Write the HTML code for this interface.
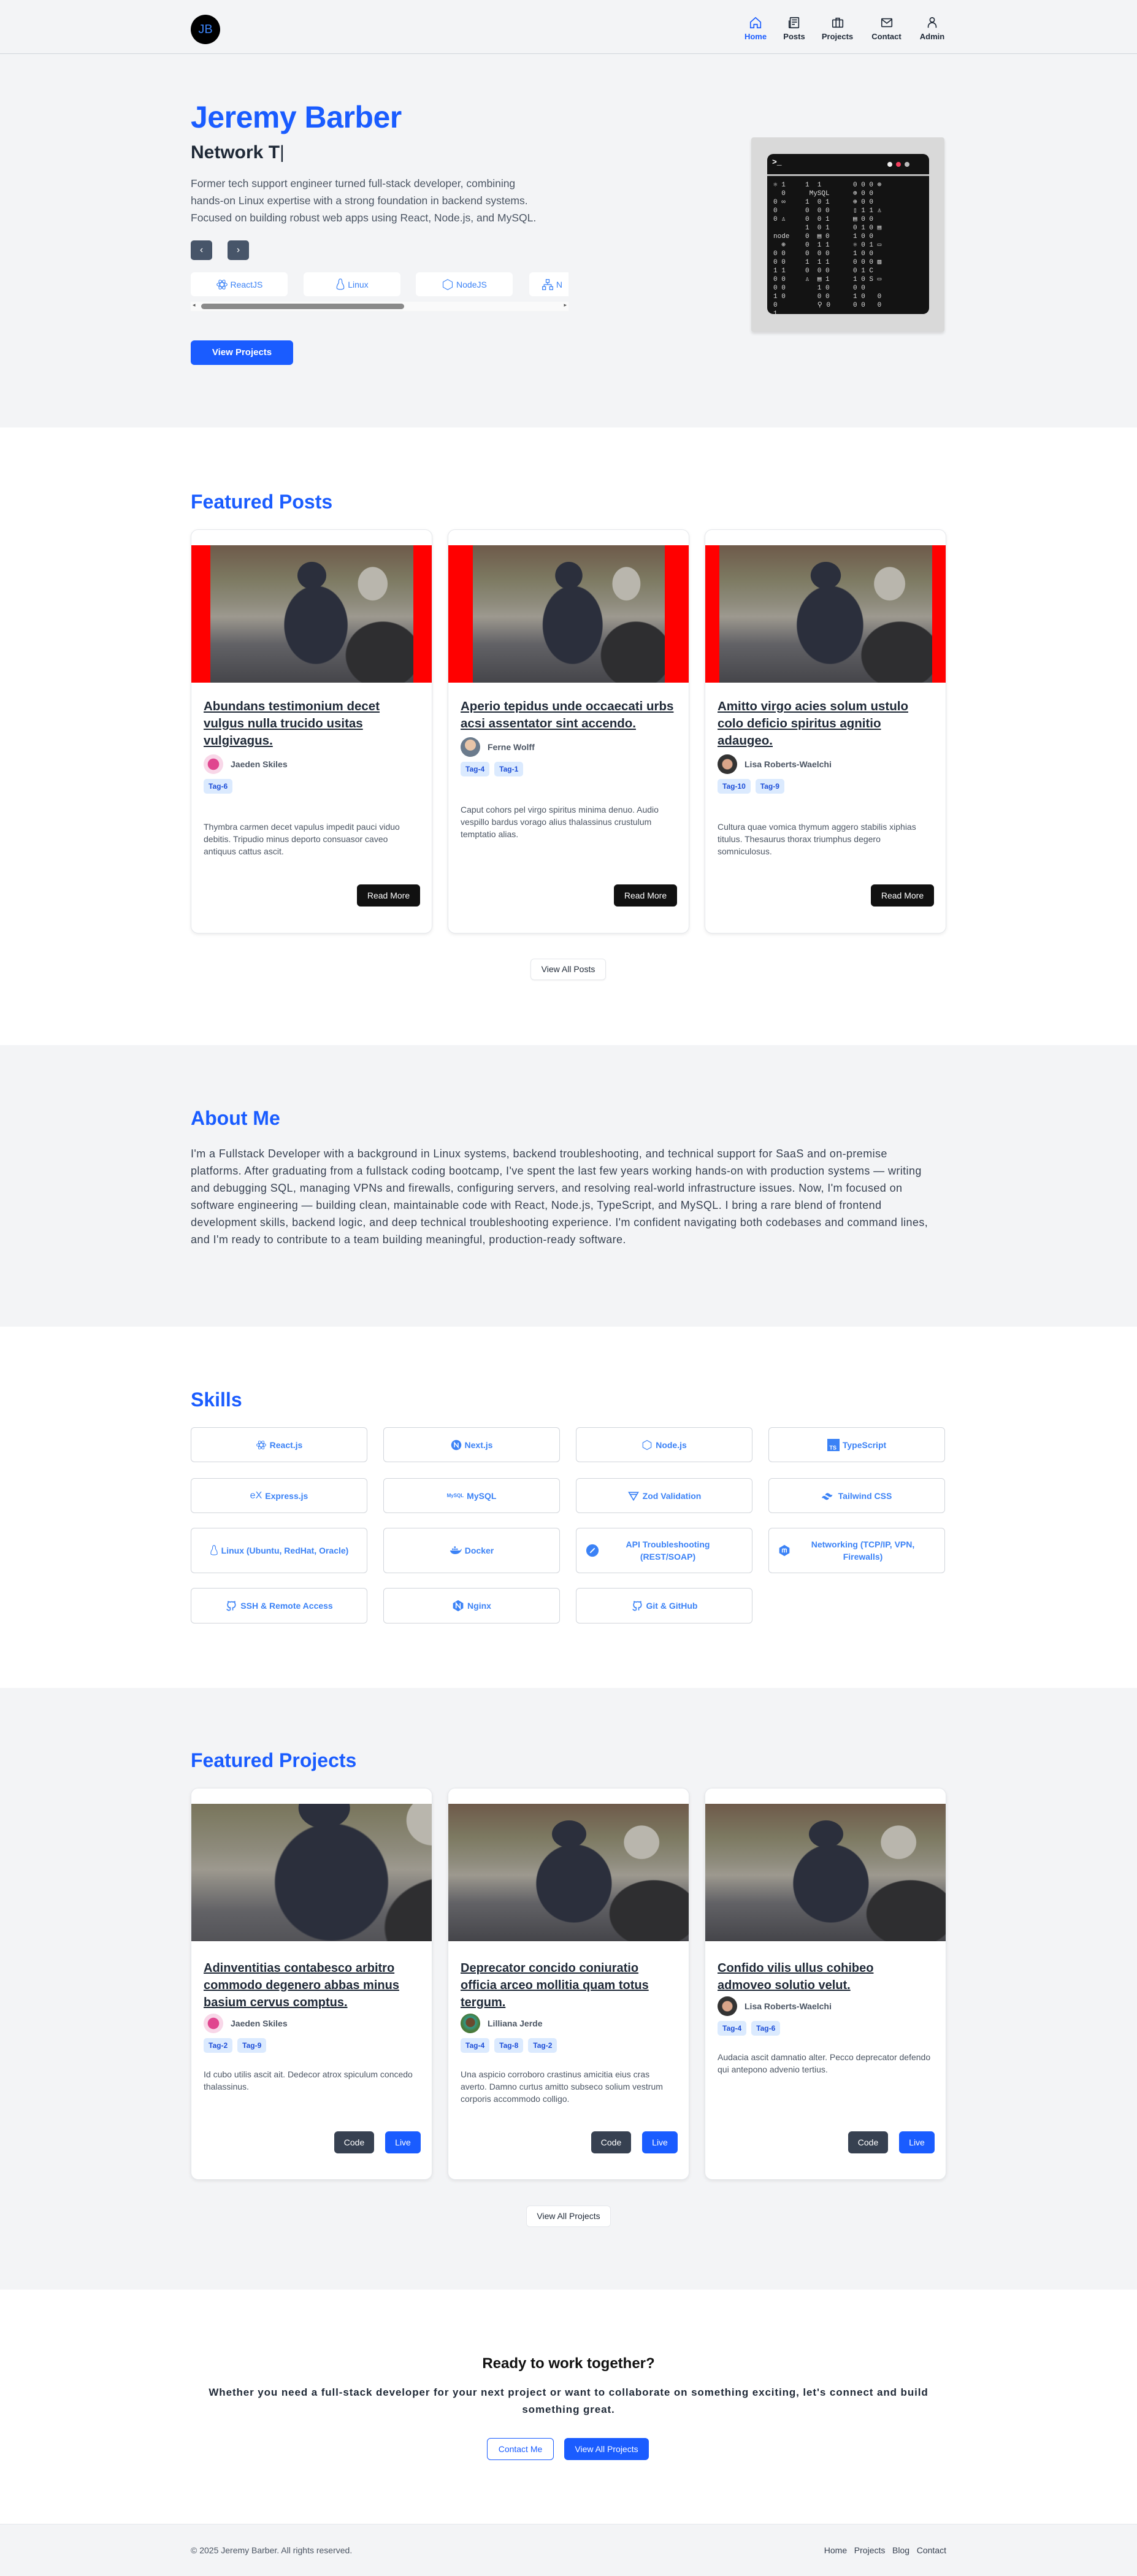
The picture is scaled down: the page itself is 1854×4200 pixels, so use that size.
<!DOCTYPE html>
<html><head><meta charset="utf-8">
<style>
*{box-sizing:border-box;margin:0;padding:0}
body{width:1854px;height:4200px;font-family:"Liberation Sans",sans-serif;background:#fff;color:#1f2937;position:relative;overflow:hidden}
.abs{position:absolute}
.sec{position:absolute;left:0;width:1854px}
.gray{background:#f3f4f6}
h2.t{position:absolute;left:311px;font-size:32px;font-weight:700;color:#1a5cff}
.card{position:absolute;background:#fff;border:1px solid #e5e7eb;border-radius:12px;box-shadow:0 2px 6px rgba(0,0,0,.08);width:394px;overflow:hidden}
.photo{background:
radial-gradient(ellipse 22% 40% at 52% 58%,#2b2f3c 70%,rgba(43,47,60,0) 72%),
radial-gradient(ellipse 10% 14% at 50% 22%,#2b2f3c 70%,rgba(0,0,0,0) 72%),
radial-gradient(ellipse 30% 40% at 85% 80%,#2e2e30 60%,rgba(0,0,0,0) 62%),
radial-gradient(ellipse 12% 20% at 80% 28%,#b9b6ad 60%,rgba(0,0,0,0) 62%),
linear-gradient(180deg,#6e5a4a 0%,#7d7a62 25%,#8e8b7c 42%,#9d998f 52%,#626266 72%,#45454a 100%)}
.ctitle{position:absolute;left:20px;right:10px;font-size:20.5px;font-weight:700;line-height:28px;text-decoration:underline;color:#1f2937;white-space:nowrap}
.auth{position:absolute;left:20px;display:flex;align-items:center;font-size:14px;font-weight:700;color:#4b5563}
.av{width:32px;height:32px;border-radius:50%;margin-right:12px}
.tags{position:absolute;left:20px;display:flex;gap:8px}
.tag{background:#dbeafe;color:#1d4ed8;font-size:12px;font-weight:700;padding:0 8px;height:24px;line-height:24px;border-radius:5px}
.desc{position:absolute;left:20px;right:20px;font-size:14px;line-height:20px;color:#4b5563}
.btn{position:absolute;height:36px;line-height:36px;font-size:14px;border-radius:6px;text-align:center}
.skill{position:absolute;width:288px;border:1px solid #d1d5db;border-radius:6px;display:flex;align-items:center;justify-content:center;color:#3b82f6;font-size:14px;font-weight:700;text-align:center;line-height:20px;background:#fff}
.skill svg{margin-right:5px;flex:none}
.nav{position:absolute;top:26px;text-align:center;font-size:13px;font-weight:700;color:#1f2937}
.nav svg{display:block;margin:0 auto 4px}
.chip{position:absolute;top:444px;width:158px;height:39px;background:#fff;border-radius:6px;color:#3b82f6;font-size:14px;display:flex;align-items:center;justify-content:center}
.term{font-family:"Liberation Mono",monospace;color:#ddd;font-size:11px;line-height:14px;position:absolute;top:44px;white-space:pre}
</style></head><body>

<div class="sec gray" style="top:0;height:697px"></div>
<div class="sec" style="top:87px;height:1px;background:#d1d5db"></div>
<div class="abs" style="left:311px;top:24px;width:48px;height:48px;border-radius:50%;background:#000;color:#3b82f6;font-size:20px;line-height:48px;text-align:center">JB</div>

<div class="nav" style="left:1211px;width:42px;color:#1a5cff"><svg width="22" height="22" viewBox="0 0 24 24" fill="none" stroke="#1a5cff" stroke-width="1.8"><path d="M3 11l9-8 9 8v10h-6v-6H9v6H3z"/></svg>Home</div>
<div class="nav" style="left:1277px;width:36px"><svg width="22" height="22" viewBox="0 0 24 24" fill="none" stroke="#1f2937" stroke-width="1.8"><rect x="5" y="3" width="15" height="18" rx="1"/><path d="M8 7h9M8 11h9M8 15h5M3 8v12a1 1 0 0 0 2 0"/></svg>Posts</div>
<div class="nav" style="left:1337px;width:57px"><svg width="22" height="22" viewBox="0 0 24 24" fill="none" stroke="#1f2937" stroke-width="1.8"><rect x="3" y="7" width="18" height="13" rx="1"/><path d="M9 7V4h6v3M9 7v13M15 7v13"/></svg>Projects</div>
<div class="nav" style="left:1418px;width:55px"><svg width="22" height="22" viewBox="0 0 24 24" fill="none" stroke="#1f2937" stroke-width="1.8"><rect x="3" y="5" width="18" height="14" rx="1"/><path d="M3 6l9 7 9-7"/></svg>Contact</div>
<div class="nav" style="left:1497px;width:46px"><svg width="22" height="22" viewBox="0 0 24 24" fill="none" stroke="#1f2937" stroke-width="1.8"><circle cx="12" cy="7" r="4"/><path d="M5 21v-2a7 7 0 0 1 14 0v2"/></svg>Admin</div>

<div class="abs" style="left:311px;top:162px;font-size:50px;font-weight:700;color:#1a5cff;letter-spacing:-0.5px">Jeremy Barber</div>
<div class="abs" style="left:311px;top:232px;font-size:30px;font-weight:700;color:#1f2937">Network T<span style="font-weight:300">|</span></div>
<div class="abs" style="left:311px;top:285px;white-space:nowrap;font-size:17.5px;line-height:28px;color:#4b5563">Former tech support engineer turned full-stack developer, combining<br>hands-on Linux expertise with a strong foundation in backend systems.<br>Focused on building robust web apps using React, Node.js, and MySQL.</div>
<div class="abs" style="left:311px;top:392px;width:35px;height:32px;background:#475569;border-radius:5px;color:#fff;text-align:center;line-height:32px;font-size:16px">‹</div>
<div class="abs" style="left:371px;top:392px;width:35px;height:32px;background:#475569;border-radius:5px;color:#fff;text-align:center;line-height:32px;font-size:16px">›</div>
<div class="abs" style="left:311px;top:440px;width:616px;height:70px;overflow:hidden">
  <div class="chip" style="left:0;top:4px"><svg width="20" height="20" viewBox="0 0 24 24" fill="none" stroke="#3b82f6" stroke-width="1.3"><ellipse cx="12" cy="12" rx="10" ry="4"/><ellipse cx="12" cy="12" rx="10" ry="4" transform="rotate(60 12 12)"/><ellipse cx="12" cy="12" rx="10" ry="4" transform="rotate(120 12 12)"/></svg>&nbsp;ReactJS</div>
  <div class="chip" style="left:184px;top:4px"><svg width="16" height="22" viewBox="0 0 16 24" fill="none" stroke="#3b82f6" stroke-width="1.3"><path d="M8 2c-3 0-3 4-3 7-2 3-4 6-3 10 2 2 10 2 12 0 1-4-1-7-3-10 0-3 0-7-3-7z"/></svg>&nbsp;Linux</div>
  <div class="chip" style="left:367px;top:4px"><svg width="20" height="22" viewBox="0 0 24 24" fill="none" stroke="#3b82f6" stroke-width="1.3"><path d="M12 2l9 5v10l-9 5-9-5V7z"/></svg>&nbsp;NodeJS</div>
  <div class="chip" style="left:552px;top:4px;justify-content:flex-start;padding-left:20px"><svg width="20" height="20" viewBox="0 0 24 24" fill="none" stroke="#3b82f6" stroke-width="1.5"><rect x="9" y="2" width="6" height="6"/><rect x="2" y="16" width="6" height="6"/><rect x="16" y="16" width="6" height="6"/><path d="M12 8v4M5 16v-4h14v4"/></svg>&nbsp;N</div>
  <div class="abs" style="left:0;top:52px;width:616px;height:15px;background:#fafafa"><div class="abs" style="left:17px;top:3px;width:331px;height:9px;border-radius:5px;background:#8a8a8a"></div><span class="abs" style="left:3px;top:0;font-size:9px;color:#555">◂</span><span class="abs" style="right:3px;top:0;font-size:9px;color:#555">▸</span></div>
</div>
<div class="abs" style="left:311px;top:555px;width:167px;height:40px;background:#1a5cff;border-radius:6px;color:#fff;font-size:15px;font-weight:700;text-align:center;line-height:40px">View Projects</div>

<div class="abs" style="left:1225px;top:224px;width:315px;height:317px;background:#d9d9d9;border-radius:4px;box-shadow:0 3px 5px rgba(0,0,0,.12)">
  <div class="abs" style="left:26px;top:27px;width:264px;height:261px;background:#131313;border-radius:10px;overflow:hidden">
    <div class="abs" style="left:8px;top:6px;color:#fff;font-family:'Liberation Mono',monospace;font-size:13px;font-weight:700">&gt;_</div>
    <div class="abs" style="left:196px;top:13px;width:8px;height:8px;border-radius:50%;background:#eee"></div>
    <div class="abs" style="left:210px;top:13px;width:8px;height:8px;border-radius:50%;background:#f43f5e"></div>
    <div class="abs" style="left:224px;top:13px;width:8px;height:8px;border-radius:50%;background:#bbb"></div>
    <div class="abs" style="left:0;top:33px;width:264px;height:3px;background:#bbb"></div>
    <div class="term" style="left:10px">⚛ 1
  0
0 ∞
0
0 ♙
 
node
  ⊕
0 0
0 0
1 1
0 0
0 0
1 0
0
1</div>
    <div class="term" style="left:62px">1  1 
 MySQL
1  0 1
0  0 0
0  0 1
1  0 1
0  ▤ 0
0  1 1
0  0 0
1  1 1
0  0 0
♙  ▤ 1
   1 0
   0 0
   ⚲ 0</div>
    <div class="term" style="left:140px">0 0 0 ⊕
⊕ 0 0
⊕ 0 0
▯ 1 1 ♙
▤ 0 0
0 1 0 ▤
1 0 0
⚛ 0 1 ▭
1 0 0
0 0 0 ▨
0 1 C
1 0 S ▭
0 0
1 0   0
0 0   0</div>
  </div>
</div>

<h2 class="t" style="top:800px">Featured Posts</h2>

<div class="card" style="left:311px;top:863px;height:659px">
  <div class="abs" style="left:0;top:25px;width:394px;height:224px;background:#ff0000"><div class="photo abs" style="left:31px;top:0;width:331px;height:224px"></div></div>
  <div class="ctitle" style="top:274px">Abundans testimonium decet<br>vulgus nulla trucido usitas<br>vulgivagus.</div>
  <div class="auth" style="top:366px"><div class="av" style="background:radial-gradient(circle at 50% 50%,#e0468f 40%,#f8d7e8 42%)"></div>Jaeden Skiles</div>
  <div class="tags" style="top:406px"><span class="tag">Tag-6</span></div>
  <div class="desc" style="top:474px">Thymbra carmen decet vapulus impedit pauci viduo debitis. Tripudio minus deporto consuasor caveo antiquus cattus ascit.</div>
  <div class="btn" style="left:270px;top:578px;width:103px;background:#111;color:#fff">Read More</div>
</div>
<div class="card" style="left:730px;top:863px;height:659px">
  <div class="abs" style="left:0;top:25px;width:394px;height:224px;background:#ff0000"><div class="photo abs" style="left:40px;top:0;width:313px;height:224px"></div></div>
  <div class="ctitle" style="top:274px">Aperio tepidus unde occaecati urbs<br>acsi assentator sint accendo.</div>
  <div class="auth" style="top:338px"><div class="av" style="background:radial-gradient(circle at 50% 40%,#e8c5a8 35%,#6b7b8c 37%)"></div>Ferne Wolff</div>
  <div class="tags" style="top:378px"><span class="tag">Tag-4</span><span class="tag">Tag-1</span></div>
  <div class="desc" style="top:446px">Caput cohors pel virgo spiritus minima denuo. Audio vespillo bardus vorago alius thalassinus crustulum temptatio alias.</div>
  <div class="btn" style="left:270px;top:578px;width:103px;background:#111;color:#fff">Read More</div>
</div>
<div class="card" style="left:1149px;top:863px;height:659px">
  <div class="abs" style="left:0;top:25px;width:394px;height:224px;background:#ff0000"><div class="photo abs" style="left:23px;top:0;width:347px;height:224px"></div></div>
  <div class="ctitle" style="top:274px">Amitto virgo acies solum ustulo<br>colo deficio spiritus agnitio<br>adaugeo.</div>
  <div class="auth" style="top:366px"><div class="av" style="background:radial-gradient(circle at 50% 50%,#d9a58a 35%,#333 40%)"></div>Lisa Roberts-Waelchi</div>
  <div class="tags" style="top:406px"><span class="tag">Tag-10</span><span class="tag">Tag-9</span></div>
  <div class="desc" style="top:474px">Cultura quae vomica thymum aggero stabilis xiphias titulus. Thesaurus thorax triumphus degero somniculosus.</div>
  <div class="btn" style="left:270px;top:578px;width:103px;background:#111;color:#fff">Read More</div>
</div>
<div class="btn" style="left:865px;top:1563px;width:123px;height:35px;line-height:33px;border:1px solid #e5e7eb;background:#fff;color:#1f2937;box-shadow:0 1px 2px rgba(0,0,0,.06)">View All Posts</div>

<div class="sec gray" style="top:1704px;height:459px"></div>
<h2 class="t" style="top:1805px">About Me</h2>
<div class="abs" style="left:311px;top:1867px;white-space:nowrap;font-size:18px;letter-spacing:0.4px;line-height:28px;color:#374151">I'm a Fullstack Developer with a background in Linux systems, backend troubleshooting, and technical support for SaaS and on-premise<br>platforms. After graduating from a fullstack coding bootcamp, I've spent the last few years working hands-on with production systems — writing<br>and debugging SQL, managing VPNs and firewalls, configuring servers, and resolving real-world infrastructure issues. Now, I'm focused on<br>software engineering — building clean, maintainable code with React, Node.js, TypeScript, and MySQL. I bring a rare blend of frontend<br>development skills, backend logic, and deep technical troubleshooting experience. I'm confident navigating both codebases and command lines,<br>and I'm ready to contribute to a team building meaningful, production-ready software.</div>

<h2 class="t" style="top:2264px">Skills</h2>
<div class="skill" style="left:311px;top:2327px;height:57px"><svg width="18" height="18" viewBox="0 0 24 24" fill="none" stroke="#3b82f6" stroke-width="1.3"><ellipse cx="12" cy="12" rx="10" ry="4"/><ellipse cx="12" cy="12" rx="10" ry="4" transform="rotate(60 12 12)"/><ellipse cx="12" cy="12" rx="10" ry="4" transform="rotate(120 12 12)"/></svg>React.js</div>
<div class="skill" style="left:625px;top:2327px;height:57px"><svg width="18" height="18" viewBox="0 0 24 24"><circle cx="12" cy="12" r="11" fill="#3b82f6"/><path d="M8 17V7l8 10V7" stroke="#fff" stroke-width="2" fill="none"/></svg>Next.js</div>
<div class="skill" style="left:939px;top:2327px;height:57px"><svg width="18" height="18" viewBox="0 0 24 24" fill="none" stroke="#3b82f6" stroke-width="1.5"><path d="M12 2l9 5v10l-9 5-9-5V7z"/></svg>Node.js</div>
<div class="skill" style="left:1253px;top:2327px;height:57px"><svg width="20" height="20" viewBox="0 0 24 24"><rect width="24" height="24" fill="#3b82f6"/><text x="4" y="21" font-size="11" font-weight="700" fill="#fff" font-family="Liberation Sans">TS</text></svg>TypeScript</div>

<div class="skill" style="left:311px;top:2410px;height:57px"><span style="font-weight:400;margin-right:5px;font-size:16px">eX</span>Express.js</div>
<div class="skill" style="left:625px;top:2410px;height:57px"><span style="font-size:8px;margin-right:5px">MySQL</span>MySQL</div>
<div class="skill" style="left:939px;top:2410px;height:57px"><svg width="20" height="18" viewBox="0 0 24 20" fill="none" stroke="#3b82f6" stroke-width="2"><path d="M3 3h18l-9 15z M6 7h12"/></svg>Zod Validation</div>
<div class="skill" style="left:1253px;top:2410px;height:57px"><svg width="22" height="14" viewBox="0 0 24 14" fill="#3b82f6"><path d="M6 6c1-4 4-5 7-3 2 1 3 3 6 2-1 4-4 5-7 3-2-1-3-3-6-2zM0 11c1-4 4-5 7-3 2 1 3 3 6 2-1 4-4 5-7 3-2-1-3-3-6-2z"/></svg>Tailwind CSS</div>

<div class="skill" style="left:311px;top:2491px;height:74px"><svg width="14" height="20" viewBox="0 0 16 24" fill="none" stroke="#3b82f6" stroke-width="1.3"><path d="M8 2c-3 0-3 4-3 7-2 3-4 6-3 10 2 2 10 2 12 0 1-4-1-7-3-10 0-3 0-7-3-7z"/></svg>Linux (Ubuntu, RedHat, Oracle)</div>
<div class="skill" style="left:625px;top:2491px;height:74px"><svg width="20" height="16" viewBox="0 0 24 18" fill="#3b82f6"><path d="M1 9h20c1-2 2-3 3-3-1 5-5 10-13 10C5 16 2 13 1 9z"/><rect x="5" y="5" width="3" height="3"/><rect x="9" y="5" width="3" height="3"/><rect x="9" y="1" width="3" height="3"/><rect x="13" y="5" width="3" height="3"/></svg>Docker</div>
<div class="skill" style="left:939px;top:2491px;height:74px;justify-content:flex-start;padding-left:15px"><svg width="22" height="22" viewBox="0 0 24 24"><circle cx="12" cy="12" r="11" fill="#3b82f6"/><path d="M8 16l8-8" stroke="#fff" stroke-width="2"/></svg><span style="flex:1;padding-right:30px">API Troubleshooting<br>(REST/SOAP)</span></div>
<div class="skill" style="left:1253px;top:2491px;height:74px;justify-content:flex-start;padding-left:15px"><svg width="20" height="22" viewBox="0 0 24 24"><path d="M12 1l10 6v10l-10 6-10-6V7z" fill="#3b82f6"/><path d="M8 9v7M12 9v7M16 9v7M8 9h8" stroke="#fff" stroke-width="1.8"/></svg><span style="flex:1;padding-right:20px">Networking (TCP/IP, VPN,<br>Firewalls)</span></div>

<div class="skill" style="left:311px;top:2589px;height:58px"><svg width="20" height="20" viewBox="0 0 24 24" fill="none" stroke="#3b82f6" stroke-width="2"><path d="M9 21c-4 1-4-2-6-2M15 21v-3c0-1 0-2-1-2 3 0 6-1 6-6 0-1 0-2-1-3 0-1 0-2 0-3 0 0-1 0-3 1-2-1-4-1-6 0C7 4 6 4 6 4c0 1 0 2 0 3-1 1-1 2-1 3 0 5 3 6 6 6-1 0-1 1-1 2v3"/></svg>SSH &amp; Remote Access</div>
<div class="skill" style="left:625px;top:2589px;height:58px"><svg width="20" height="22" viewBox="0 0 24 24"><path d="M12 1l10 6v10l-10 6-10-6V7z" fill="#3b82f6"/><path d="M8 17V7l8 10V7" stroke="#fff" stroke-width="2" fill="none"/></svg>Nginx</div>
<div class="skill" style="left:939px;top:2589px;height:58px"><svg width="20" height="20" viewBox="0 0 24 24" fill="none" stroke="#3b82f6" stroke-width="2"><path d="M9 21c-4 1-4-2-6-2M15 21v-3c0-1 0-2-1-2 3 0 6-1 6-6 0-1 0-2-1-3 0-1 0-2 0-3 0 0-1 0-3 1-2-1-4-1-6 0C7 4 6 4 6 4c0 1 0 2 0 3-1 1-1 2-1 3 0 5 3 6 6 6-1 0-1 1-1 2v3"/></svg>Git &amp; GitHub</div>

<div class="sec gray" style="top:2752px;height:981px"></div>
<h2 class="t" style="top:2852px">Featured Projects</h2>

<div class="card" style="left:311px;top:2915px;height:639px">
  <div class="photo abs" style="left:0;top:25px;width:394px;height:224px;background-size:150% 150%;background-position:40% 60%"></div>
  <div class="ctitle" style="top:279px;font-size:20px">Adinventitias contabesco arbitro<br>commodo degenero abbas minus<br>basium cervus comptus.</div>
  <div class="auth" style="top:367px"><div class="av" style="background:radial-gradient(circle at 50% 50%,#e0468f 40%,#f8d7e8 42%)"></div>Jaeden Skiles</div>
  <div class="tags" style="top:407px"><span class="tag">Tag-2</span><span class="tag">Tag-9</span></div>
  <div class="desc" style="top:456px">Id cubo utilis ascit ait. Dedecor atrox spiculum concedo thalassinus.</div>
  <div class="btn" style="left:233px;top:559px;width:65px;background:#374151;color:#fff">Code</div>
  <div class="btn" style="left:316px;top:559px;width:58px;background:#1a5cff;color:#fff">Live</div>
</div>
<div class="card" style="left:730px;top:2915px;height:639px">
  <div class="photo abs" style="left:0;top:25px;width:394px;height:224px"></div>
  <div class="ctitle" style="top:279px;font-size:20px">Deprecator concido coniuratio<br>officia arceo mollitia quam totus<br>tergum.</div>
  <div class="auth" style="top:367px"><div class="av" style="background:radial-gradient(circle at 50% 45%,#6b4a2e 30%,#2f9a8a 35%,#4a7a3a 60%)"></div>Lilliana Jerde</div>
  <div class="tags" style="top:407px"><span class="tag">Tag-4</span><span class="tag">Tag-8</span><span class="tag">Tag-2</span></div>
  <div class="desc" style="top:456px">Una aspicio corroboro crastinus amicitia eius cras averto. Damno curtus amitto subseco solium vestrum corporis accommodo colligo.</div>
  <div class="btn" style="left:233px;top:559px;width:65px;background:#374151;color:#fff">Code</div>
  <div class="btn" style="left:316px;top:559px;width:58px;background:#1a5cff;color:#fff">Live</div>
</div>
<div class="card" style="left:1149px;top:2915px;height:639px">
  <div class="photo abs" style="left:0;top:25px;width:394px;height:224px"></div>
  <div class="ctitle" style="top:279px;font-size:20px">Confido vilis ullus cohibeo<br>admoveo solutio velut.</div>
  <div class="auth" style="top:339px"><div class="av" style="background:radial-gradient(circle at 50% 50%,#d9a58a 35%,#333 40%)"></div>Lisa Roberts-Waelchi</div>
  <div class="tags" style="top:379px"><span class="tag">Tag-4</span><span class="tag">Tag-6</span></div>
  <div class="desc" style="top:428px">Audacia ascit damnatio alter. Pecco deprecator defendo qui antepono advenio tertius.</div>
  <div class="btn" style="left:233px;top:559px;width:65px;background:#374151;color:#fff">Code</div>
  <div class="btn" style="left:316px;top:559px;width:58px;background:#1a5cff;color:#fff">Live</div>
</div>
<div class="btn" style="left:858px;top:3596px;width:138px;height:35px;line-height:33px;border:1px solid #e5e7eb;background:#fff;color:#1f2937">View All Projects</div>

<div class="abs" style="left:0;top:3840px;width:1854px;text-align:center;font-size:24px;font-weight:700;color:#111">Ready to work together?</div>
<div class="abs" style="left:311px;top:3887px;width:1232px;text-align:center;font-size:17px;letter-spacing:0.9px;font-weight:700;line-height:28px;color:#1f2937;white-space:nowrap">Whether you need a full-stack developer for your next project or want to collaborate on something exciting, let's connect and build<br>something great.</div>
<div class="btn" style="left:794px;top:3975px;width:109px;border:1px solid #1a5cff;color:#1a5cff;background:#fff;line-height:34px">Contact Me</div>
<div class="btn" style="left:920px;top:3975px;width:138px;background:#1a5cff;color:#fff">View All Projects</div>

<div class="sec gray" style="top:4115px;height:85px;border-top:1px solid #e5e7eb"></div>
<div class="abs" style="left:311px;top:4150px;font-size:14px;color:#4b5563">© 2025 Jeremy Barber. All rights reserved.</div>
<div class="abs" style="right:311px;top:4150px;font-size:14px;color:#374151"><span>Home</span>&nbsp;&nbsp;&nbsp;<span>Projects</span>&nbsp;&nbsp;&nbsp;<span>Blog</span>&nbsp;&nbsp;&nbsp;<span>Contact</span></div>

</body></html>
